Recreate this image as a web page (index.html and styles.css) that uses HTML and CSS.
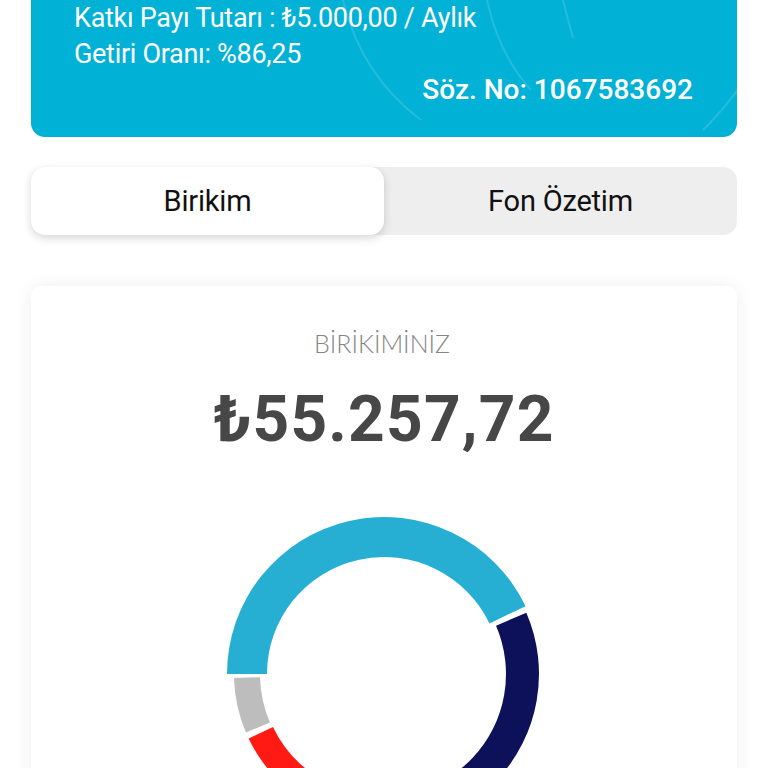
FILE: index.html
```html
<!DOCTYPE html>
<html lang="tr">
<head>
<meta charset="utf-8">
<title>Birikim</title>
<link rel="stylesheet" href="styles.css">
</head>
<body>
<div class="page">
  <section class="policy">
    <svg class="policy-deco" aria-hidden="true">
      <path d="M312 40 Q 330 115 390 160" />
      <path d="M456 40 Q 468 95 500 130" />
      <path d="M532 40 Q 537 60 542 78" />
      <path d="M708 128 Q 692 150 672 170" />
    </svg>
    <div class="policy-line">Katkı Payı Tutarı : ₺5.000,00 / Aylık</div>
    <div class="policy-line">Getiri Oranı: %86,25</div>
    <div class="policy-no">Söz. No: 1067583692</div>
  </section>

  <nav class="segmented">
    <div class="seg seg-active">Birikim</div>
    <div class="seg">Fon Özetim</div>
  </nav>

  <section class="card">
    <div class="card-label">BİRİKİMİNİZ</div>
    <div class="card-amount">₺55.257,72</div>
    <svg class="donut" width="320" height="320" viewBox="0 0 320 320" aria-hidden="true">
      <path class="seg-cyan" d="M3 160 A157 157 0 0 1 301.58 92.16 L265.51 109.44 A117 117 0 0 0 43 160 Z" />
      <path class="seg-navy" d="M302.35 98.70 A155 155 0 0 1 106.99 305.65 L118.28 274.64 A122 122 0 0 0 272.04 111.75 Z" />
      <path class="seg-gray" d="M21.92 218.61 A150 150 0 0 1 10.05 163.93 L36.04 163.25 A124 124 0 0 0 45.86 208.45 Z" />
      <path class="seg-red" d="M103.81 299.08 A150 150 0 0 1 24.61 224.58 L48.98 212.95 A123 123 0 0 0 113.92 274.05 Z" />
    </svg>
  </section>
</div>
</body>
</html>
```

FILE: styles.css
```css
html, body {
  margin: 0;
  padding: 0;
  background: #ffffff;
}

body {
  font-family: Roboto, "Liberation Sans", "Noto Sans", sans-serif;
  overflow: hidden;
}

.page {
  padding: 0 31px;
  display: flex;
  flex-direction: column;
}

.policy {
  position: relative;
  margin-top: -40px;
  padding: 40px 43px 29px 43px;
  background: #02b1d6;
  border-radius: 14px;
  color: #ffffff;
  overflow: hidden;
}

.policy-deco {
  position: absolute;
  left: 0;
  top: 0;
  width: 100%;
  height: 100%;
  fill: none;
  stroke: rgba(255, 255, 255, 0.14);
  stroke-width: 2;
}

.policy-line {
  position: relative;
  font-size: 27px;
  line-height: 36px;
  letter-spacing: -0.3px;
}

.policy-no {
  position: relative;
  text-align: right;
  font-size: 28px;
  font-weight: 500;
  line-height: 36px;
  padding-right: 1px;
  letter-spacing: 0;
}

.segmented {
  margin-top: 30px;
  height: 68px;
  display: grid;
  grid-template-columns: 353px 1fr;
  background: #eeeeee;
  border-radius: 14px;
}

.seg {
  display: flex;
  align-items: center;
  justify-content: center;
  font-size: 29px;
  color: #111111;
  letter-spacing: -0.2px;
}

.seg-active {
  background: #ffffff;
  border-radius: 14px;
  box-shadow: 0 3px 9px rgba(0, 0, 0, 0.16);
}

.card {
  margin-top: 51px;
  background: #ffffff;
  border-radius: 10px;
  box-shadow: 0 0 18px rgba(0, 0, 0, 0.07);
  padding-top: 40px;
  height: 600px;
  display: flex;
  flex-direction: column;
  align-items: center;
}

.card-label {
  font-family: Lato, "Open Sans", sans-serif;
  font-weight: 300;
  font-size: 25px;
  line-height: 34px;
  color: #858585;
  padding-right: 4px;
}

.card-amount {
  margin-top: 25px;
  font-size: 64px;
  font-weight: 700;
  line-height: 70px;
  color: #474747;
  letter-spacing: 1.2px;
}

.donut {
  margin-top: 59px;
  display: block;
}

.seg-cyan { fill: #26afd3; }
.seg-navy { fill: #0c115a; }
.seg-gray { fill: #bdbdbd; }
.seg-red  { fill: #ff1a14; }
```
